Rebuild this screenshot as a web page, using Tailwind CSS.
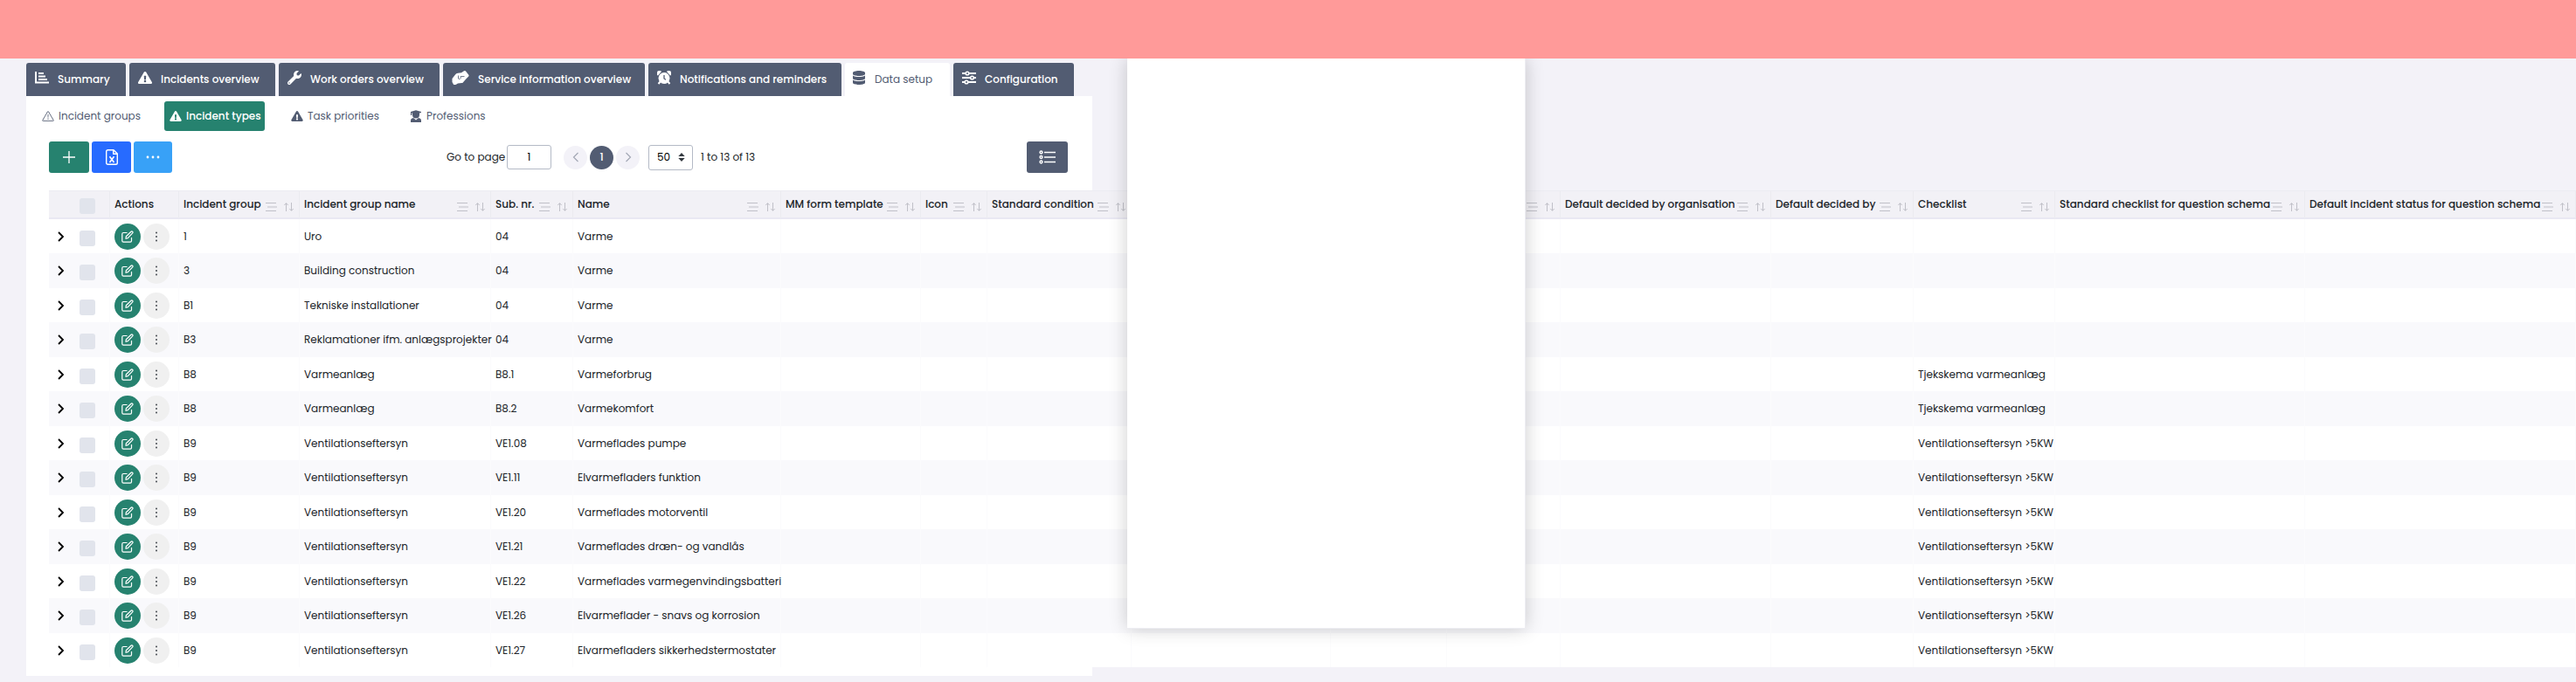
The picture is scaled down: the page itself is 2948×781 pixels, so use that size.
<!DOCTYPE html>
<html lang="en">
<head>
<meta charset="utf-8">
<title>Data setup – Incident types</title>
<script src="https://cdn.jsdelivr.net/npm/@tailwindcss/browser@4"></script>
</head>
<body class="relative min-h-screen overflow-x-hidden bg-[#f3f2f8] font-['Poppins','Inter',sans-serif] text-xs text-[#212529]">

<svg class="hidden" aria-hidden="true">
  <symbol id="warn" viewBox="0 0 576 512"><path fill="currentColor" d="M569.517 440.013C587.975 472.007 564.806 512 527.94 512H48.054c-36.937 0-59.999-40.055-41.577-71.987L246.423 23.985c18.467-32.009 64.72-31.951 83.154 0l239.94 416.028zM288 354c-25.405 0-46 20.595-46 46s20.595 46 46 46 46-20.595 46-46-20.595-46-46-46zm-43.673-165.346l7.418 136c.347 6.364 5.609 11.346 11.982 11.346h48.546c6.373 0 11.635-4.982 11.982-11.346l7.418-136c.375-6.874-5.098-12.654-11.982-12.654h-63.383c-6.884 0-12.356 5.78-11.981 12.654z"/></symbol>
  <symbol id="warn-line" viewBox="0 0 576 512"><path fill="none" stroke="currentColor" stroke-width="38" stroke-linejoin="round" d="M268 34q20-30 40 0l246 424q10 34-24 36H46q-34-2-24-36z"/><path fill="currentColor" d="M268 170h40l-6 160h-28z"/><circle cx="288" cy="392" r="28" fill="currentColor"/></symbol>
  <symbol id="chart" viewBox="0 0 16 14"><path fill="none" stroke="currentColor" stroke-width="2" d="M1 0v12.500h15"/><path stroke="currentColor" stroke-width="2" d="M4 2h6M4 5.500h8M4 9h10"/></symbol>
  <symbol id="wrench" viewBox="0 0 512 512"><path fill="currentColor" d="M507.730 109.100c-2.240-9.030-13.540-12.090-20.120-5.510l-74.360 74.360-67.880-11.310-11.310-67.880 74.360-74.360c6.620-6.620 3.430-17.900-5.660-20.160-47.380-11.740-99.550.910-136.580 37.930-39.640 39.640-50.550 97.100-34.050 147.200L18.740 402.760c-24.990 24.990-24.990 65.510 0 90.500 24.990 24.990 65.510 24.990 90.500 0l213.210-213.210c50.120 16.710 107.470 5.680 147.370-34.220 37.070-37.070 49.700-89.320 37.910-136.730zM64 472c-13.250 0-24-10.750-24-24 0-13.260 10.750-24 24-24s24 10.740 24 24c0 13.250-10.750 24-24 24z"/></symbol>
  <symbol id="hands" viewBox="0 0 20 16"><path fill="currentColor" d="M.5 9 4 4.500Q5 3 7 2.700l4-.5 3-2q1.500-.5 2.200.5L19.500 5q.3 1-.5 1.700l-2.500 2.500-3.500 4q-.6.800-1.500.9L7 14.500 4.500 16H2.200L.5 13z"/><path fill="none" stroke="#525c72" stroke-width=".8" d="M7.500 5.500V9q1.800 1.500 2.700-.5V6.500h4.300"/></symbol>
  <symbol id="clock" viewBox="0 0 16 16"><path fill="currentColor" d="M0 5V2q0-2 2-2h2l1 1-4 4.500zM16 5V2q0-2-2-2h-2l-1 1 4 4.500z"/><circle cx="8" cy="8.500" r="6.500" fill="currentColor"/><path stroke="currentColor" stroke-width="2" d="m4 12-2.500 3M12 12l2.500 3"/><path fill="none" stroke="#525c72" stroke-width="1.300" d="M8 5v4l2 1.300"/></symbol>
  <symbol id="database" viewBox="0 0 448 512"><path fill="currentColor" d="M448 73.143v45.714C448 159.143 347.667 192 224 192S0 159.143 0 118.857V73.143C0 32.857 100.333 0 224 0s224 32.857 224 73.143zM448 176v102.857C448 319.143 347.667 352 224 352S0 319.143 0 278.857V176c48.125 33.143 136.208 48.572 224 48.572S399.874 209.143 448 176zm0 160v102.857C448 479.143 347.667 512 224 512S0 479.143 0 438.857V336c48.125 33.143 136.208 48.572 224 48.572S399.874 369.143 448 336z"/></symbol>
  <symbol id="sliders" viewBox="0 0 16 16"><path stroke="currentColor" stroke-width="2" d="M0 3h16M0 8h16M0 13h16"/><g fill="#525c72" stroke="currentColor" stroke-width="1.600"><circle cx="6" cy="3" r="1.800"/><circle cx="11.500" cy="8" r="1.800"/><circle cx="5" cy="13" r="1.800"/></g></symbol>
  <symbol id="graduate" viewBox="0 0 14 14"><path fill="currentColor" d="M1 2 7 .3 13 2v1l-2 .6v1.900a4 4 0 0 1-8 0V3.600L2.200 3.300V6H1zM1 14v-2q0-2.500 3-3l3 2.500L10 9q3 .5 3 3v2z"/></symbol>
  <symbol id="plus" viewBox="0 0 16 16"><path stroke="currentColor" stroke-width="1.300" d="M8 1v14M1 8h14"/></symbol>
  <symbol id="excel" viewBox="0 0 14 18"><path fill="none" stroke="currentColor" stroke-width="1.400" stroke-linejoin="round" d="M2.500.7H9L13.300 5v10.500q0 1.800-1.800 1.800h-9Q.7 17.300.7 15.500v-13Q.7.7 2.500.7zM8.700.7v4.600h4.600"/><path stroke="currentColor" stroke-width="1.600" d="m4.500 8.300 5 6.700M9.500 8.300l-5 6.700"/></symbol>
  <symbol id="dots" viewBox="0 0 16 4"><g fill="currentColor"><circle cx="2" cy="2" r="1.400"/><circle cx="8" cy="2" r="1.400"/><circle cx="14" cy="2" r="1.400"/></g></symbol>
  <symbol id="vdots" viewBox="0 0 4 12"><g fill="currentColor"><circle cx="2" cy="1.500" r=".9"/><circle cx="2" cy="6" r=".9"/><circle cx="2" cy="10.500" r=".9"/></g></symbol>
  <symbol id="list" viewBox="0 0 20 16"><path stroke="currentColor" stroke-width="1.300" d="M6 2.500h13M6 8h13M6 13.500h13"/><g fill="none" stroke="currentColor" stroke-width="1.500"><circle cx="2.500" cy="2.500" r="1.400"/><circle cx="2.500" cy="8" r="1.400"/><circle cx="2.500" cy="13.500" r="1.400"/></g></symbol>
  <symbol id="left" viewBox="0 0 8 12"><path fill="none" stroke="currentColor" stroke-width="1.200" d="M6.500 1 1.500 6l5 5"/></symbol>
  <symbol id="right" viewBox="0 0 8 12"><path fill="none" stroke="currentColor" stroke-width="1.200" d="m1.500 1 5 5-5 5"/></symbol>
  <symbol id="expand" viewBox="0 0 8 12"><path fill="none" stroke="currentColor" stroke-width="1.800" d="m1 1 5 5-5 5"/></symbol>
  <symbol id="updown" viewBox="0 0 8 10"><path fill="currentColor" d="M4 0 7.700 4H.3zM4 10 .3 6h7.400z"/></symbol>
  <symbol id="edit" viewBox="0 0 14 14"><g fill="none" stroke="currentColor" stroke-width="1.200" stroke-linejoin="round"><path d="M6.500 2.500H2.200q-1.400 0-1.400 1.400v7.900q0 1.400 1.400 1.400h7.900q1.400 0 1.400-1.400V8"/><path d="m5 9.300.3-2.500L11 1.200q.8-.7 1.600 0 .9.800.1 1.700L7.300 8.600z"/></g></symbol>
  <symbol id="filter" viewBox="0 0 13 10"><path stroke="currentColor" stroke-width="1" d="M0 .5h12M2 5h11M0 9.500h12"/></symbol>
  <symbol id="sort" viewBox="0 0 11 10"><path fill="none" stroke="currentColor" stroke-width="1" d="M2.500 10V.8M.3 3 2.500.6 4.700 3M8.500 0v9.200M6.300 7l2.200 2.300L10.700 7"/></symbol>
</svg>

<header class="relative z-20 h-[67px] bg-[#ff9a99]"></header>

<main class="ml-[30px] max-w-[1220px] pt-[5px]">
  <nav class="flex gap-1 font-medium text-white" aria-label="Sections">
    <a href="#" class="flex h-[38px] w-[114px] items-center gap-[10px] rounded-t-[3px] bg-[#525c72] pl-[10px]"><svg class="mb-1 h-[14px] w-4"><use href="#chart"/></svg>Summary</a>
    <a href="#" class="flex h-[38px] w-[167px] items-center gap-[10px] rounded-t-[3px] bg-[#525c72] pl-[10px]"><svg class="mb-1 size-4"><use href="#warn"/></svg>Incidents overview</a>
    <a href="#" class="flex h-[38px] w-[184px] items-center gap-[10px] rounded-t-[3px] bg-[#525c72] pl-[10px]"><svg class="mb-1 size-4"><use href="#wrench"/></svg>Work orders overview</a>
    <a href="#" class="flex h-[38px] w-[231px] items-center gap-[10px] rounded-t-[3px] bg-[#525c72] pl-[10px]"><svg class="mb-1 h-4 w-5"><use href="#hands"/></svg>Service information overview</a>
    <a href="#" class="flex h-[38px] w-[221px] items-center gap-[10px] rounded-t-[3px] bg-[#525c72] pl-[10px]"><svg class="mb-1 size-4"><use href="#clock"/></svg>Notifications and reminders</a>
    <a href="#" aria-current="page" class="flex h-[38px] w-[120px] items-center gap-[10px] rounded-t-[3px] bg-white pl-[8px] font-normal text-[#525c72]"><svg class="mb-1 size-4"><use href="#database"/></svg>Data setup</a>
    <a href="#" class="flex h-[38px] w-[138px] items-center gap-[10px] rounded-t-[3px] bg-[#525c72] pl-[10px]"><svg class="mb-1 size-4"><use href="#sliders"/></svg>Configuration</a>
  </nav>

  <section class="bg-white pb-[10px]">
    <nav class="flex gap-6 pt-[6px] pl-3 text-[#525c72]" aria-label="Data setup">
      <a href="#" class="flex h-[34px] w-[122px] items-center gap-[5px] pl-[6px]"><svg class="h-3 w-[14px]"><use href="#warn-line"/></svg>Incident groups</a>
      <a href="#" aria-current="page" class="flex h-[34px] w-[115px] items-center gap-[5px] rounded-[3px] bg-[#26826f] pl-[6px] font-medium text-white"><svg class="h-3 w-[14px]"><use href="#warn"/></svg>Incident types</a>
      <a href="#" class="flex h-[34px] w-[112px] items-center gap-[5px] pl-[6px]"><svg class="h-3 w-[14px]"><use href="#warn"/></svg>Task priorities</a>
      <a href="#" class="flex h-[34px] items-center gap-[5px] pl-[6px]"><svg class="size-[14px]"><use href="#graduate"/></svg>Professions</a>
    </nav>

    <div class="mt-3 flex h-9 items-center justify-between px-[26px] pr-7">
      <div class="flex gap-[3px] text-white">
        <button aria-label="Add" class="flex h-9 w-[46px] items-center justify-center rounded-[3px] bg-[#26826f]"><svg class="size-4"><use href="#plus"/></svg></button>
        <button aria-label="Export to Excel" class="flex h-9 w-[45px] items-center justify-center rounded-[3px] bg-[#276bff]"><svg class="h-[18px] w-[14px]"><use href="#excel"/></svg></button>
        <button aria-label="More" class="flex h-9 w-11 items-center justify-center rounded-[3px] bg-[#38a1f7]"><svg class="h-1 w-4"><use href="#dots"/></svg></button>
      </div>
      <div class="flex items-center">
        <label for="page" class="w-[69px] whitespace-nowrap">Go to page</label>
        <input id="page" value="1" class="h-7 w-[51px] rounded-[3px] border border-[#b4bac6] bg-white text-center text-black">
        <div class="ml-[14px] flex gap-[3px]">
          <button aria-label="Previous page" class="flex size-[27px] items-center justify-center rounded-full bg-[#f3f2f8] text-[#a3a8b5]"><svg class="h-3 w-2"><use href="#left"/></svg></button>
          <button class="size-[27px] rounded-full bg-[#525c72] font-medium text-white">1</button>
          <button aria-label="Next page" class="flex size-[27px] items-center justify-center rounded-full bg-[#f3f2f8] text-[#a3a8b5]"><svg class="h-3 w-2"><use href="#right"/></svg></button>
        </div>
        <div class="relative ml-[10px]">
          <select aria-label="Rows per page" class="h-[29px] w-[51px] appearance-none rounded-[3px] border border-[#b4bac6] bg-white pl-[9px] text-black"><option>50</option></select>
          <svg class="pointer-events-none absolute top-[9px] right-[9px] h-[10px] w-2 text-[#343a40]"><use href="#updown"/></svg>
        </div>
        <span class="ml-[9px] w-[59px] whitespace-nowrap">1 to 13 of 13</span>
      </div>
      <button aria-label="Columns" class="flex h-9 w-[47px] items-center justify-center rounded-[3px] bg-[#525c72] text-white"><svg class="h-4 w-5"><use href="#list"/></svg></button>
    </div>

    <table class="mt-5 ml-[26px] w-[2892px] table-fixed border-separate border-spacing-0 text-left whitespace-nowrap">
      <colgroup id="cols"></colgroup>
      <thead><tr id="head"></tr></thead>
      <tbody id="rows"></tbody>
    </table>
  </section>
</main>

<aside class="absolute top-[67px] left-[1290px] z-10 h-[653px] w-[456px] border-r border-b border-[#ededf2] bg-white shadow-[0_0_20px_rgba(0,0,0,0.2)]"></aside>

<script>
const columns = [
  ['', 70], ['Actions', 79], ['Incident group', 138], ['Incident group name', 219], ['Sub. nr.', 94], ['Name', 238],
  ['MM form template', 160], ['Icon', 76], ['Standard condition', 165], ['', 228], ['', 133], ['', 130],
  ['Default decided by organisation', 241], ['Default decided by', 163], ['Checklist', 162],
  ['Standard checklist for question schema', 286], ['Default incident status for question schema', 310]
];
const V = 'Ventilationseftersyn', T = 'Tjekskema varmeanlæg', K = 'Ventilationseftersyn >5KW';
const data = [
  ['1', 'Uro', '04', 'Varme', ''],
  ['3', 'Building construction', '04', 'Varme', ''],
  ['B1', 'Tekniske installationer', '04', 'Varme', ''],
  ['B3', 'Reklamationer ifm. anlægsprojekter', '04', 'Varme', ''],
  ['B8', 'Varmeanlæg', 'B8.1', 'Varmeforbrug', T],
  ['B8', 'Varmeanlæg', 'B8.2', 'Varmekomfort', T],
  ['B9', V, 'VE1.08', 'Varmeflades pumpe', K],
  ['B9', V, 'VE1.11', 'Elvarmefladers funktion', K],
  ['B9', V, 'VE1.20', 'Varmeflades motorventil', K],
  ['B9', V, 'VE1.21', 'Varmeflades dræn- og vandlås', K],
  ['B9', V, 'VE1.22', 'Varmeflades varmegenvindingsbatteri', K],
  ['B9', V, 'VE1.26', 'Elvarmeflader - snavs og korrosion', K],
  ['B9', V, 'VE1.27', 'Elvarmefladers sikkerhedstermostater', K]
];
const box = 'size-[18px] appearance-none rounded-[3px] bg-[#e1e4ec]';
document.getElementById('cols').innerHTML = columns.map(c => `<col style="width:${c[1]}px">`).join('');
document.getElementById('head').innerHTML = columns.map(([name], i) => {
  const th = 'h-[33px] border-t border-r border-b-2 border-t-[#ececf2] border-r-[#ebebf0] border-b-[#e9e8f3] bg-[#f2f1f6] p-0 font-medium';
  if (i === 0) return `<th class="${th}"><div class="flex pt-[3px] pl-[35px]"><input type="checkbox" aria-label="Select all rows" class="${box}"></div></th>`;
  if (i === 1) return `<th class="${th}"><div class="pr-[6px] pl-[5px]">${name}</div></th>`;
  return `<th class="${th}"><div class="flex items-center justify-between pr-[6px] pl-[5px]"><span>${name}</span><span class="flex shrink-0 gap-2 pt-[6px] text-[#c0c0c8]"><svg class="h-[10px] w-[13px]"><use href="#filter"/></svg><svg class="h-[10px] w-[11px]"><use href="#sort"/></svg></span></div></th>`;
}).join('');
document.getElementById('rows').innerHTML = data.map((r, n) => {
  const td = 'border-r border-[#fbfbfd] p-0';
  const cells = columns.slice(2).map((c, i) => `<td class="${td}"><div class="pl-[5px]">${i < 4 ? r[i] : c[0] === 'Checklist' ? r[4] : ''}</div></td>`).join('');
  return `<tr class="bg-white odd:h-[39px] even:h-[40px] even:bg-[#f9f9fc]">
    <td class="${td}"><div class="flex items-center gap-[17px] pl-[10px]"><button aria-label="Expand row ${n + 1}" class="text-black"><svg class="h-3 w-2"><use href="#expand"/></svg></button><span class="flex pt-1"><input type="checkbox" aria-label="Select row ${n + 1}" class="${box}"></span></div></td>
    <td class="${td}"><div class="flex gap-[3px] pl-[5px]"><button aria-label="Edit" class="flex size-[30px] items-center justify-center rounded-full bg-[#26826f] text-white"><svg class="size-[14px]"><use href="#edit"/></svg></button><button aria-label="More actions" class="flex size-[30px] items-center justify-center rounded-full bg-[#f0f0f0] text-[#343a40]"><svg class="h-3 w-1"><use href="#vdots"/></svg></button></div></td>${cells}</tr>`;
}).join('');
</script>
</body>
</html>
